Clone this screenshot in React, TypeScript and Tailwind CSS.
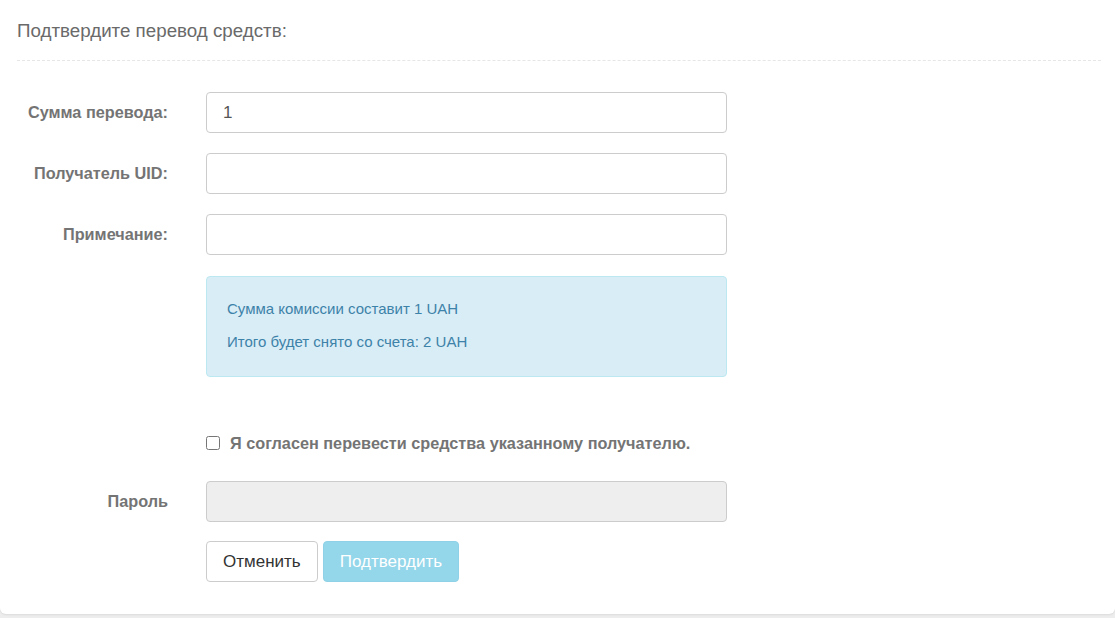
const font = { fontFamily: '"Liberation Sans", Arial, sans-serif' };

function Field({ label, value, disabled }: { label: string; value?: string; disabled?: boolean }) {
  return (
    <div className="flex items-center">
      <label className="w-[168px] shrink-0 text-right text-[16.25px] font-bold text-[#747474]">{label}</label>
      <input
        className={
          "ml-[38px] h-[41px] w-[521px] rounded-[4px] border border-[#ccc] px-4 text-[17px] text-[#555] outline-none " +
          (disabled ? "bg-[#eee]" : "bg-white")
        }
        defaultValue={value}
        disabled={disabled}
      />
    </div>
  );
}

export default function App() {
  return (
    <div className="min-h-screen bg-[#ededed]" style={font}>
      <div className="h-[614px] rounded-b-[6px] bg-white shadow-[0_1px_2px_rgba(0,0,0,0.08)]">
        <div className="px-[17px] pt-[20px]">
          <h3 className="text-[18.75px] leading-[22px] text-[#6a6a6a]">Подтвердите перевод средств:</h3>
          <div className="mt-[18px] w-[1084px] border-t border-dashed border-[#e6e6e6]" />
        </div>

        <div className="mt-[31px] flex flex-col gap-[20px]">
          <Field label="Сумма перевода:" value="1" />
          <Field label="Получатель UID:" />
          <Field label="Примечание:" />
        </div>

        <div className="ml-[206px] mt-[21px] h-[101px] w-[521px] rounded-[4px] border border-[#bce8f1] bg-[#d9edf7] px-5 pt-[22px] text-[15px] leading-5 text-[#3d82a8]">
          <p>Сумма комиссии составит 1 UAH</p>
          <p className="mt-[13px]">Итого будет снято со счета: 2 UAH</p>
        </div>

        <label className="ml-[206px] mt-[56px] flex h-[20px] items-center gap-[10px] text-[16.25px] font-bold text-[#747474]">
          <input type="checkbox" className="h-[14px] w-[14px] rounded-sm" />
          Я согласен перевести средства указанному получателю.
        </label>

        <div className="mt-[28px]">
          <Field label="Пароль" disabled />
        </div>

        <div className="ml-[206px] mt-[19px] flex gap-[5px]">
          <button className="h-[41px] rounded-[4px] border border-[#ccc] bg-white px-4 text-[17px] text-[#333]">
            Отменить
          </button>
          <button className="h-[41px] rounded-[4px] border border-[#8fd1e6] bg-[#94d6ea] px-4 text-[17px] text-white">
            Подтвердить
          </button>
        </div>
      </div>
    </div>
  );
}
